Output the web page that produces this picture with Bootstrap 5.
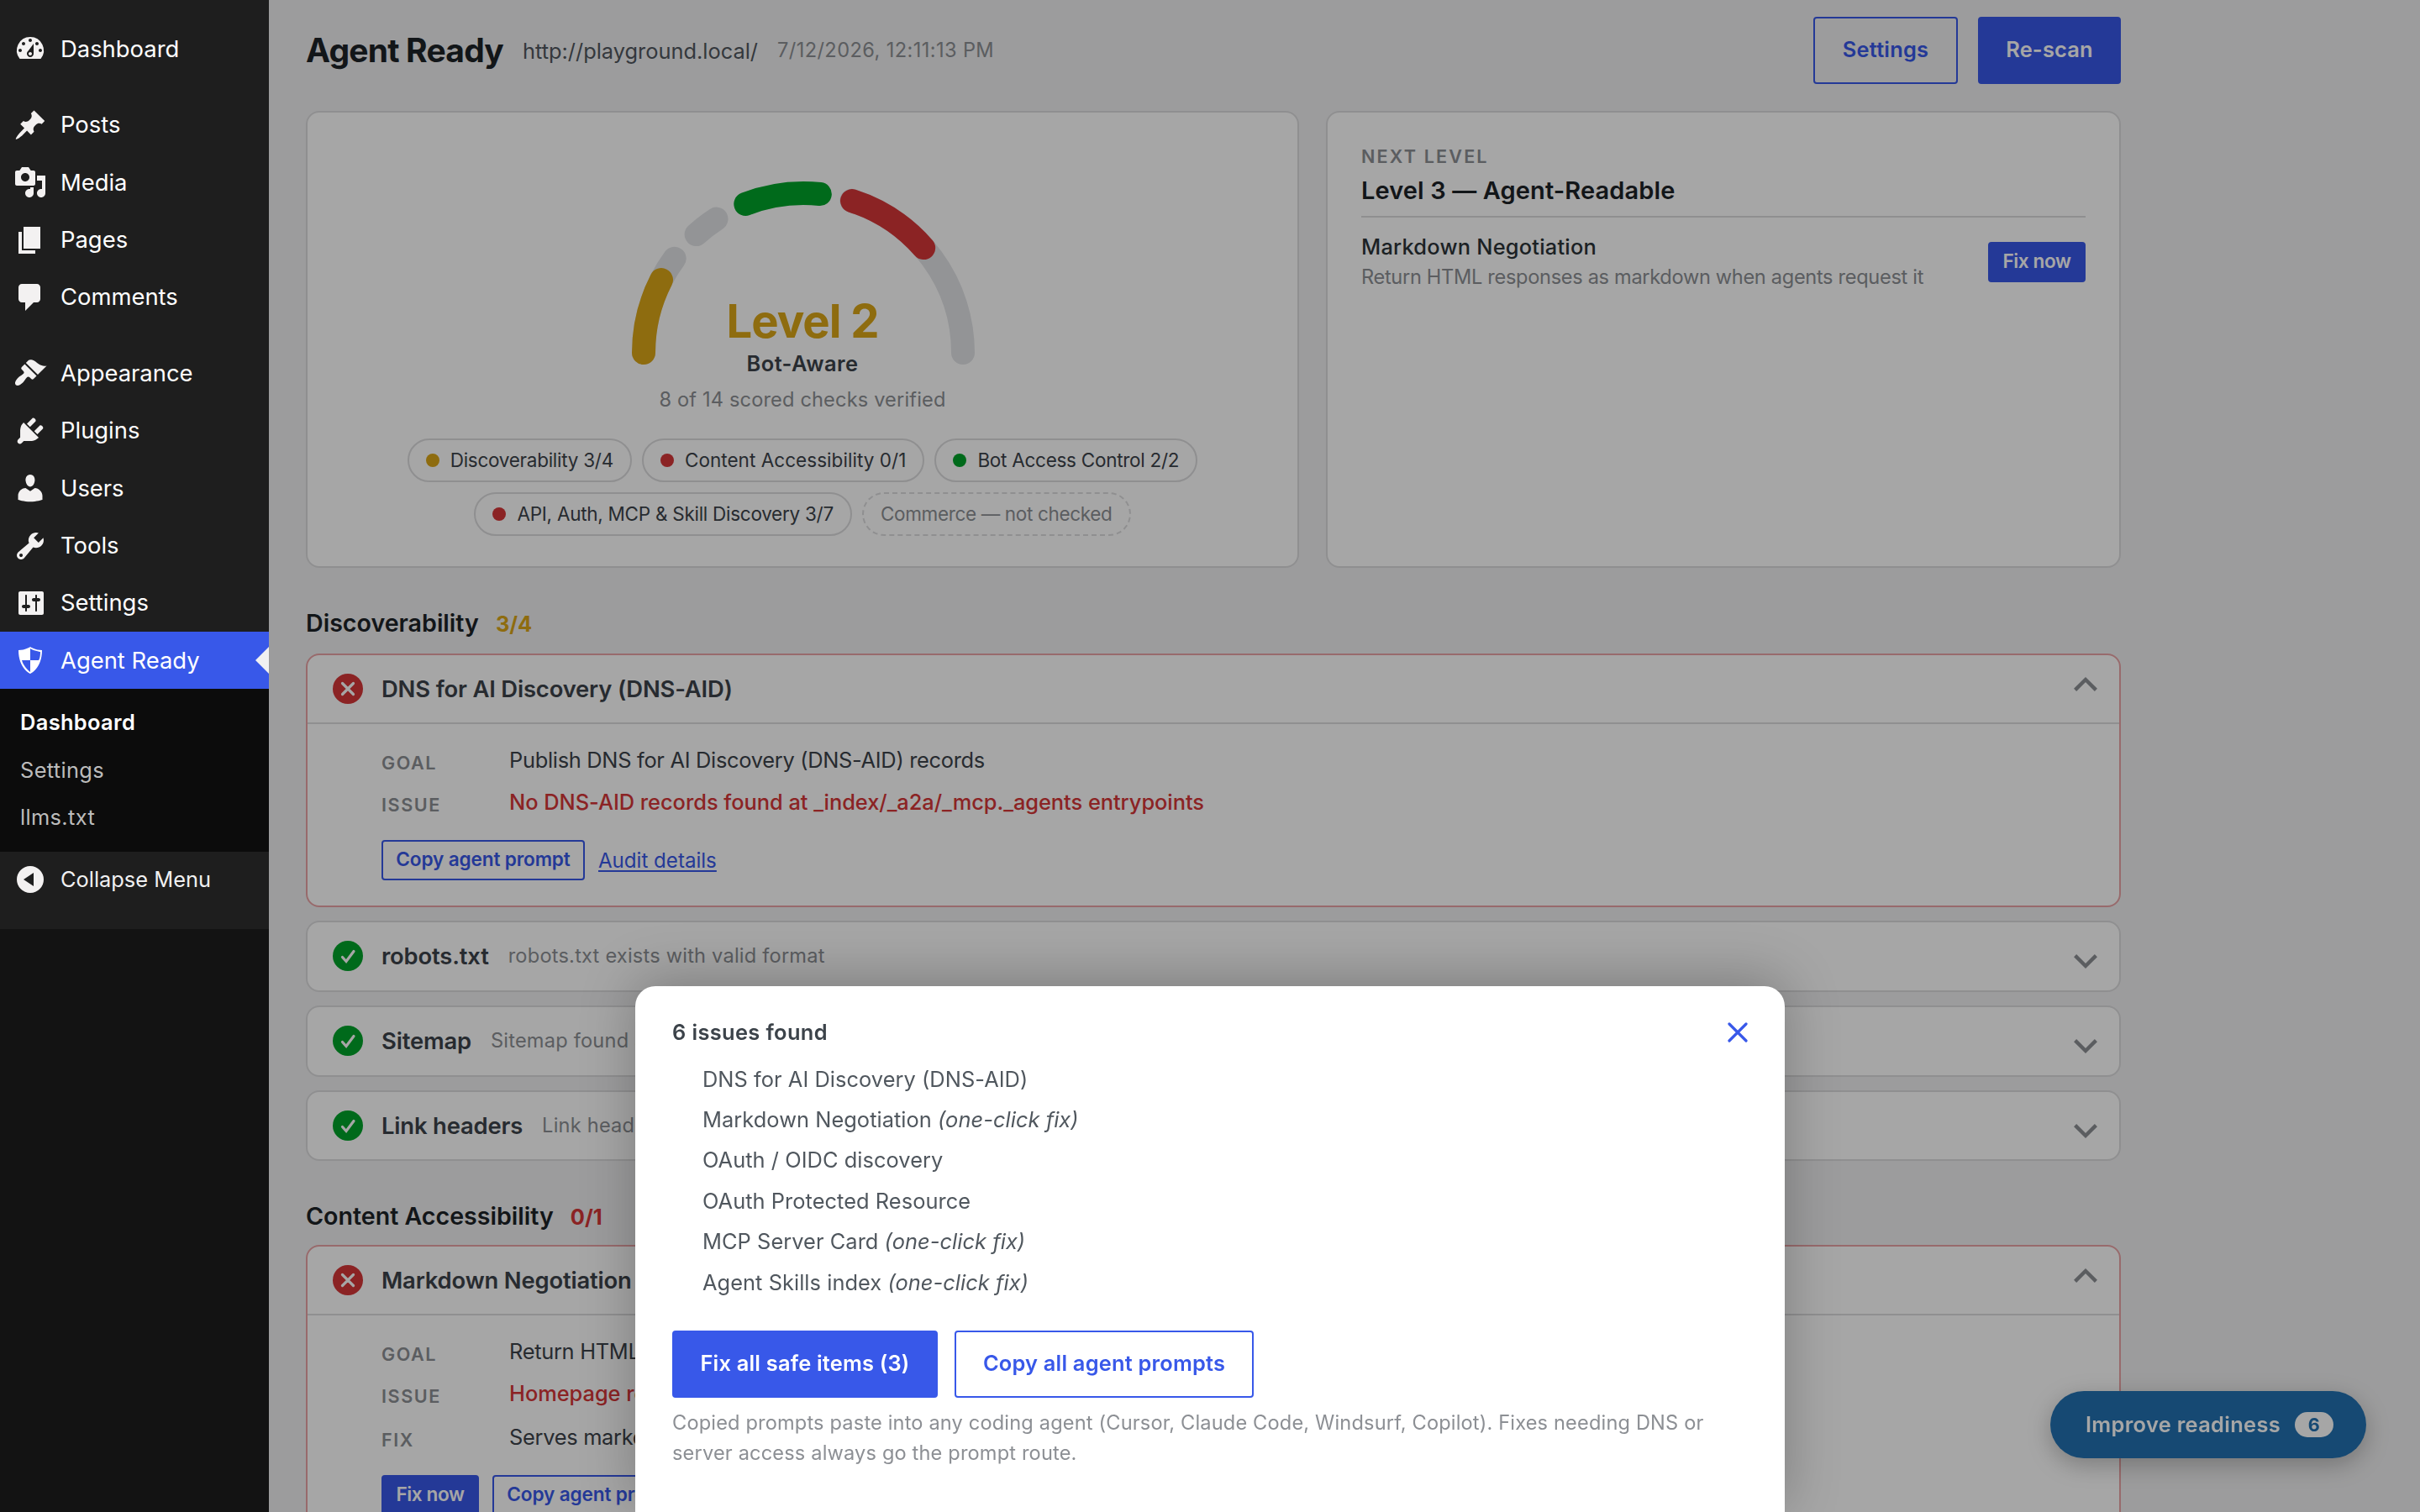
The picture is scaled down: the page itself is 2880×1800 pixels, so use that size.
<!DOCTYPE html>
<html lang="en">
<head>
<meta charset="utf-8">
<title>Agent Ready</title>
<link rel="stylesheet" href="https://cdn.jsdelivr.net/npm/bootstrap@5.3.0/dist/css/bootstrap.min.css">
<style>
  :root { --ink:#1d2327; --text:#3c434a; --soft:#50575e; --muted:#8c8f94; --line:#dcdcde; --blue:#3858e9; --red:#d63638; --green:#00a32a; --gold:#dba617; }
  body { font-family:Inter,"Liberation Sans",sans-serif; font-size:25.4px; line-height:38.4px; background:#f0f0f1; color:var(--text); height:1800px; overflow:hidden; }
  .side-back { width:320px; height:1800px; background:#1e1e1e; }
  .side-menu { position:relative; z-index:20; background:#1e1e1e; height:1106px; padding-top:24.3px; }
  .side-link { height:68.4px; padding-left:16px; gap:16px; color:#fff; font-size:27.4px; text-decoration:none; }
  .side-link:hover { color:#fff; }
  .side-link span { margin-top:-1px; }
  .side-link svg { width:40px; height:40px; fill:#f3f1f1; flex:none; }
  .side-gap { height:22px; }
  .side-link.current { background:var(--blue); position:relative; height:68px; }
  .side-link.current svg { fill:#fff; }
  .side-link.current::after { content:""; position:absolute; right:0; top:18px; border:16px solid transparent; border-left:0; border-right-color:#f0f0f1; }
  .side-sub { background:#0c0c0c; padding:12px 0 12.8px 24px; letter-spacing:.014em; }
  .sub-link { display:block; height:56.4px; line-height:56.4px; color:#bcbcbc; font-size:25.4px; text-decoration:none; }
  .sub-link.on { color:#fff; font-weight:600; }
  .side-collapse { margin-top:-1px; color:#f0f0f1; font-size:25.4px; }
  .page-main { width:2204px; padding:20px 0 0 44px; flex:none; }
  .page-head { height:80px; margin-bottom:32px; }
  .page-title { font-size:39px; font-weight:700; letter-spacing:-.0204em; color:var(--ink); margin:0 23px 0 0; }
  .page-url { padding-top:2px; margin-right:23px; color:var(--soft); }
  .stamp, .note, .desc, .tip { font-size:23.6px; color:var(--muted); }
  .when { letter-spacing:.017em; }
  .btn { --bs-btn-border-width:2px; --bs-btn-border-radius:4px; --bs-btn-font-weight:600; --bs-btn-padding-y:0; --bs-btn-padding-x:0; --bs-btn-line-height:1; display:inline-flex; align-items:center; justify-content:center; height:80px; padding-bottom:2px; font-size:25.4px; letter-spacing:.008em; }
  .btn-primary { --bs-btn-bg:var(--blue); --bs-btn-border-color:var(--blue); }
  .btn-outline-primary { --bs-btn-color:var(--blue); --bs-btn-border-color:var(--blue); }
  .btn-mini { height:48px; font-size:22.6px; letter-spacing:-.0065em; padding-bottom:1px; }
  .w-settings { width:172px; } .w-scan { width:170px; margin-left:24px; } .w-fix { width:116px; letter-spacing:-.018em; } .w-copy { width:242px; } .w-fixall { width:316px; } .w-copyall { width:356px; }
  .panel { background:#fff; border:2px solid var(--line); border-radius:16px; }
  .panels { gap:32px; }
  .gauge-panel { width:1182px; height:544px; padding-top:82px; }
  .next-panel { width:946px; padding:33px 40px 0; }
  .gauge { width:408px; height:218px; margin-left:1.4px; fill:none; stroke-width:28; stroke-linecap:round; }
  .level-num { margin-top:-80px; line-height:56px; font-size:54.4px; font-weight:700; letter-spacing:-.0186em; color:var(--gold); }
  .level-name { margin-top:5px; line-height:36px; font-weight:600; letter-spacing:.018em; }
  .note { margin-top:6.5px; line-height:36px; letter-spacing:.0064em; }
  .pills { gap:12px; margin-top:28.5px; width:1000px; }
  .pill { font-size:22.5px; height:52px; padding:0 20px; gap:13px; border:2px solid var(--line); border-radius:26px; letter-spacing:-.012em; }
  .pill i { width:16px; height:16px; border-radius:50%; }
  .pill.open { letter-spacing:.002em; }
  .pill.off { border-style:dashed; color:var(--muted); letter-spacing:-.015em; }
  .dot-gold { background:var(--gold); } .dot-red { background:var(--red); } .dot-green { background:var(--green); }
  .tx-gold { color:var(--gold); } .tx-red { color:var(--red); }
  .kicker { font-size:21.6px; font-weight:600; color:var(--muted); line-height:38px; letter-spacing:.1em; }
  .next-title { font-size:29px; font-weight:600; color:var(--ink); line-height:44px; letter-spacing:.004em; }
  .next-row { border-top:2px solid var(--line); margin-top:8px; padding-top:17px; }
  .next-name { line-height:36px; font-weight:500; color:#2c3338; letter-spacing:.009em; }
  .next-desc { line-height:36px; letter-spacing:-.0135em; }
  .sect { height:40px; line-height:40px; margin:46px 0 16px; gap:20px; }
  .sect b { font-size:28.6px; font-weight:600; color:var(--ink); letter-spacing:0; }
  .sect span { font-size:25.4px; font-weight:700; padding-top:1px; }
  .sect.second { margin:45.6px 0 14px; }
  .check-card { margin-bottom:16px; }
  .check-card.bad { border-color:#eaa4a6; }
  .check-head { height:80.8px; padding:0 26px 0 30px; }
  .bad .check-head { height:82px; border-bottom:2px solid var(--line); }
  .mark-ic { width:36px; height:36px; margin-right:22px; fill:none; stroke:#fff; stroke-width:3.2; stroke-linecap:round; }
  .check-head b { font-size:27.4px; font-weight:600; letter-spacing:-.006em; }
  .desc { margin-left:23px; letter-spacing:.009em; }
  .chev { width:28px; height:18px; margin-left:auto; fill:none; stroke:var(--muted); stroke-width:4.4; margin-top:13.6px; }
  .bad .chev { margin-top:-12px; }
  .check-body { padding:24px 0 30px 88px; }
  .fact { height:38.4px; margin-bottom:12px; }
  .fact dt { width:152px; padding-top:3px; font-size:21.6px; font-weight:600; color:var(--muted); letter-spacing:.072em; }
  .fact dd { margin:0; letter-spacing:-.0114em; }
  .fact dd.err { color:var(--red); font-weight:500; letter-spacing:-.0012em; }
  .fact.late { margin:13.4px 0 0; }
  .check-act { margin-top:25.2px; gap:16px; }
  .audit { color:var(--blue); font-size:24.1px; padding-top:3px; text-decoration-thickness:2px; text-underline-offset:3px; }
  .shade { z-index:10; background:rgba(0,0,0,.35); }
  .fab { right:64px; bottom:64px; width:376px; height:80px; padding-left:42px; gap:17px; border-radius:40px; background:#2271b1; color:#fff; font-weight:600; letter-spacing:.013em; box-shadow:0 8px 28px rgba(0,0,0,.25); }
  .fab-count { width:46px; height:30px; border-radius:15px; background:#fff; color:#2271b1; font-size:21.6px; line-height:31px; font-weight:700; text-align:center; }
  .sheet { z-index:30; width:1368px; height:626px; padding:37px 44px 0; background:#fff; border-radius:24px 24px 0 0; box-shadow:0 -8px 64px rgba(0,0,0,.25); }
  .sheet-top { height:36px; font-weight:600; letter-spacing:.0148em; }
  .sheet-top svg { width:24px; height:24px; stroke:var(--blue); stroke-width:3.2; stroke-linecap:round; }
  .sheet ul { margin:13.5px 0 33.1px; padding-left:36px; line-height:48.4px; color:var(--soft); letter-spacing:.002em; }
  .sheet-act { gap:20px; }
  .tip { margin:12px 0 0; line-height:36px; letter-spacing:.0067em; }
</style>
</head>
<body class="d-flex">
<div class="side-back flex-shrink-0">
  <nav class="side-menu">
    <a class="side-link d-flex align-items-center"><svg viewBox="0 0 20 20"><path fill-rule="evenodd" d="M3.76 16h12.48A7.998 7.998 0 0 0 10 3a7.998 7.998 0 0 0-6.24 13zM10 4c.55 0 1 .45 1 1s-.45 1-1 1-1-.45-1-1 .45-1 1-1zM6 6c.55 0 1 .45 1 1s-.45 1-1 1-1-.45-1-1 .45-1 1-1zm8 0c.55 0 1 .45 1 1s-.45 1-1 1-1-.45-1-1 .45-1 1-1zm-5.37 5.55L12 7v6c0 1.1-.9 2-2 2s-2-.9-2-2c0-.57.24-1.08.63-1.45zM4 10c.55 0 1 .45 1 1s-.45 1-1 1-1-.45-1-1 .45-1 1-1zm12 0c.55 0 1 .45 1 1s-.45 1-1 1-1-.45-1-1 .45-1 1-1zm-5 3c0-.55-.45-1-1-1s-1 .45-1 1 .45 1 1 1 1-.45 1-1z"/></svg><span>Dashboard</span></a>
    <div class="side-gap"></div>
    <a class="side-link d-flex align-items-center"><svg viewBox="0 0 20 20"><path d="M10.44 3.02l1.82-1.82 6.36 6.35-1.83 1.82c-1.05-.68-2.48-.57-3.41.36l-.75.75c-.92.93-1.04 2.35-.35 3.41l-1.83 1.82-2.41-2.41-2.8 2.79c-.42.42-3.38 2.71-3.8 2.29s1.86-3.39 2.28-3.81l2.79-2.79L4.1 9.36l1.83-1.82c1.05.69 2.48.57 3.4-.36l.75-.75c.93-.92 1.05-2.35.36-3.41z"/></svg><span>Posts</span></a>
    <a class="side-link d-flex align-items-center"><svg viewBox="0 0 20 20"><path fill-rule="evenodd" d="M13 11V4c0-.55-.45-1-1-1h-1.67L9 1H5L3.67 3H2c-.55 0-1 .45-1 1v7c0 .55.45 1 1 1h10c.55 0 1-.45 1-1zM7 4.5c1.38 0 2.5 1.12 2.5 2.5S8.38 9.5 7 9.5 4.5 8.38 4.5 7 5.62 4.5 7 4.5zM14 6h5v10.5c0 1.38-1.12 2.5-2.5 2.5S14 17.88 14 16.5s1.12-2.5 2.5-2.5c.17 0 .34.02.5.05V9h-3V6zm-4 8.05V13h2v3.5c0 1.38-1.12 2.5-2.5 2.5S7 17.88 7 16.5 8.12 14 9.5 14c.17 0 .34.02.5.05z"/></svg><span>Media</span></a>
    <a class="side-link d-flex align-items-center"><svg viewBox="0 0 20 20"><path d="M6 15V2h10v13H6zm-1 1h8v2H3V5h2v11z"/></svg><span>Pages</span></a>
    <a class="side-link d-flex align-items-center"><svg viewBox="0 0 20 20"><path d="M5 2h9c1.1 0 2 .9 2 2v7c0 1.1-.9 2-2 2h-2l-5 5v-5H5c-1.1 0-2-.9-2-2V4c0-1.1.9-2 2-2z"/></svg><span>Comments</span></a>
    <div class="side-gap"></div>
    <a class="side-link d-flex align-items-center"><svg viewBox="0 0 20 20"><path d="M14.48 11.06L7.41 3.99l1.5-1.5c.5-.56 2.3-.47 3.51.32 1.21.8 1.43 1.28 2.91 2.1 1.18.64 2.45 1.26 4.45.85zm-.71.71L6.7 4.7 4.93 6.47c-.39.39-.39 1.02 0 1.41l1.06 1.06c.39.39.39 1.03 0 1.42-.6.6-1.43 1.11-2.21 1.69-.35.26-.7.53-1.01.84C1.43 14.23.4 16.08 1.4 17.07c.99 1 2.84-.03 4.18-1.36.31-.31.58-.66.85-1.02.57-.78 1.08-1.61 1.69-2.21.39-.39 1.02-.39 1.41 0l1.06 1.06c.39.39 1.02.39 1.41 0z"/></svg><span>Appearance</span></a>
    <a class="side-link d-flex align-items-center"><svg viewBox="0 0 20 20"><path d="M13.11 4.36L9.87 7.6 8 5.73l3.24-3.24c.35-.34 1.05-.2 1.56.32.52.51.66 1.21.31 1.55zm-8 1.77l.91-1.12 9.01 9.01-1.19.84c-.71.71-2.63 1.16-3.82 1.16H6.14L4.9 17.26c-.59.59-1.54.59-2.12 0-.59-.58-.59-1.53 0-2.12l1.24-1.24v-3.88c0-1.13.4-3.19 1.09-3.89zm7.26 3.97l3.24-3.24c.34-.35 1.04-.21 1.55.31.52.51.66 1.21.31 1.55l-3.24 3.25z"/></svg><span>Plugins</span></a>
    <a class="side-link d-flex align-items-center"><svg viewBox="0 0 20 20"><path d="M10 9.25c-2.27 0-2.73-3.44-2.73-3.44C7 4.02 7.82 2 9.97 2c2.16 0 2.98 2.02 2.71 3.81 0 0-.41 3.44-2.68 3.44zm0 2.57L12.72 10c2.39 0 4.52 2.33 4.52 4.53v2.49s-3.65 1.13-7.24 1.13c-3.65 0-7.24-1.13-7.24-1.13v-2.49c0-2.25 1.94-4.48 4.47-4.48z"/></svg><span>Users</span></a>
    <a class="side-link d-flex align-items-center"><svg viewBox="0 0 20 20"><path fill-rule="evenodd" d="M16.68 9.77c-1.34 1.34-3.3 1.67-4.95.99l-5.41 6.52c-.99.99-2.59.99-3.58 0s-.99-2.59 0-3.57l6.52-5.42c-.68-1.65-.35-3.61.99-4.95 1.28-1.28 3.12-1.62 4.72-1.06l-2.89 2.89 2.82 2.82 2.86-2.87c.53 1.58.18 3.39-1.08 4.65zM3.81 16.21c.4.39 1.04.39 1.43 0 .4-.4.4-1.04 0-1.43-.39-.4-1.03-.4-1.43 0-.39.39-.39 1.03 0 1.43z"/></svg><span>Tools</span></a>
    <a class="side-link d-flex align-items-center"><svg viewBox="0 0 20 20"><path fill-rule="evenodd" d="M18 16V4c0-.55-.45-1-1-1H4c-.55 0-1 .45-1 1v12c0 .55.45 1 1 1h13c.55 0 1-.45 1-1zM8 11h1c.55 0 1 .45 1 1s-.45 1-1 1H8v1.5c0 .28-.22.5-.5.5s-.5-.22-.5-.5V13H6c-.55 0-1-.45-1-1s.45-1 1-1h1V5.5c0-.28.22-.5.5-.5s.5.22.5.5V11zm5-2h-1c-.55 0-1-.45-1-1s.45-1 1-1h1V5.5c0-.28.22-.5.5-.5s.5.22.5.5V7h1c.55 0 1 .45 1 1s-.45 1-1 1h-1v5.5c0 .28-.22.5-.5.5s-.5-.22-.5-.5V9z"/></svg><span>Settings</span></a>
    <a class="side-link current d-flex align-items-center"><svg viewBox="0 0 20 20"><path fill-rule="evenodd" d="M10 2s3 2 7 2c0 11-7 14-7 14S3 15 3 4c4 0 7-2 7-2zm0 8h5s1-1 1-5c0 0-5-1-6-2v7H5c1 4 5 7 5 7v-7z"/></svg><span>Agent Ready</span></a>
    <div class="side-sub">
      <a class="sub-link on">Dashboard</a>
      <a class="sub-link">Settings</a>
      <a class="sub-link">llms.txt</a>
    </div>
    <a class="side-link side-collapse d-flex align-items-center"><svg viewBox="0 0 20 20"><path fill-rule="evenodd" d="M10 2a8 8 0 1 0 0 16 8 8 0 0 0 0-16zM12 6v8l-6-4z"/></svg><span>Collapse Menu</span></a>
  </nav>
</div>

<main class="page-main">
  <header class="page-head d-flex align-items-center">
    <h1 class="page-title">Agent Ready</h1>
    <span class="page-url">http://playground.local/</span>
    <span class="stamp when">7/12/2026, 12:11:13 PM</span>
    <button class="btn btn-outline-primary w-settings ms-auto">Settings</button>
    <button class="btn btn-primary w-scan">Re-scan</button>
  </header>

  <div class="panels d-flex">
    <section class="panel gauge-panel d-flex flex-column align-items-center">
      <svg class="gauge" viewBox="0 0 408 218">
        <g stroke="#e2e4e7">
          <path pathLength="180" d="M14 204A190 190 0 0 1 394 204" stroke-dasharray="36.2 400"/>
          <path pathLength="180" d="M14 204A190 190 0 0 1 394 204" stroke-dasharray="9.1 400" stroke-dashoffset="-47.9"/>
          <path pathLength="180" d="M14 204A190 190 0 0 1 394 204" stroke-dasharray="72.4 400" stroke-dashoffset="-107.6"/>
        </g>
        <path stroke="#dba617" pathLength="180" d="M14 204A190 190 0 0 1 394 204" stroke-dasharray="27.2 400"/>
        <path stroke="#00a32a" pathLength="180" d="M14 204A190 190 0 0 1 394 204" stroke-dasharray="27.2 400" stroke-dashoffset="-68.8"/>
        <path stroke="#d63638" pathLength="180" d="M14 204A190 190 0 0 1 394 204" stroke-dasharray="31.1 400" stroke-dashoffset="-107.8"/>
      </svg>
      <div class="level-num">Level 2</div>
      <div class="level-name">Bot-Aware</div>
      <div class="note">8 of 14 scored checks verified</div>
      <div class="pills d-flex flex-wrap justify-content-center">
        <span class="pill d-flex align-items-center"><i class="dot-gold"></i>Discoverability 3/4</span>
        <span class="pill open d-flex align-items-center"><i class="dot-red"></i>Content Accessibility 0/1</span>
        <span class="pill d-flex align-items-center"><i class="dot-green"></i>Bot Access Control 2/2</span>
        <span class="pill d-flex align-items-center"><i class="dot-red"></i>API, Auth, MCP &amp; Skill Discovery 3/7</span>
        <span class="pill off d-flex align-items-center">Commerce — not checked</span>
      </div>
    </section>
    <section class="panel next-panel">
      <div class="kicker">NEXT LEVEL</div>
      <div class="next-title">Level 3 — Agent-Readable</div>
      <div class="next-row d-flex align-items-center">
        <div>
          <div class="next-name">Markdown Negotiation</div>
          <div class="stamp next-desc">Return HTML responses as markdown when agents request it</div>
        </div>
        <button class="btn btn-primary btn-mini w-fix ms-auto">Fix now</button>
      </div>
    </section>
  </div>

  <div class="sect d-flex"><b>Discoverability</b><span class="tx-gold">3/4</span></div>

  <article class="panel check-card bad">
    <div class="check-head d-flex align-items-center"><svg class="mark-ic" viewBox="0 0 36 36"><circle cx="18" cy="18" r="18" fill="#d63638" stroke="none"/><path d="M11.5 11.5l13 13M24.5 11.5l-13 13"/></svg><b>DNS for AI Discovery (DNS-AID)</b><svg class="chev" viewBox="0 0 28 18"><path d="M1.6 16.4L14 4l12.4 12.4"/></svg></div>
    <div class="check-body">
      <dl class="m-0">
        <div class="fact d-flex"><dt>GOAL</dt><dd>Publish DNS for AI Discovery (DNS-AID) records</dd></div>
        <div class="fact d-flex m-0"><dt>ISSUE</dt><dd class="err">No DNS-AID records found at _index/_a2a/_mcp._agents entrypoints</dd></div>
      </dl>
      <div class="check-act d-flex align-items-center"><button class="btn btn-outline-primary btn-mini w-copy">Copy agent prompt</button><a class="audit" href="#">Audit details</a></div>
    </div>
  </article>

  <article class="panel check-card"><div class="check-head d-flex align-items-center"><svg class="mark-ic" viewBox="0 0 36 36"><circle cx="18" cy="18" r="18" fill="#00a32a" stroke="none"/><path d="M11.5 19.5l4.5 5L25 12.5"/></svg><b>robots.txt</b><span class="desc">robots.txt exists with valid format</span><svg class="chev" viewBox="0 0 28 18"><path d="M1.6 1.6L14 14 26.4 1.6"/></svg></div></article>
  <article class="panel check-card"><div class="check-head d-flex align-items-center"><svg class="mark-ic" viewBox="0 0 36 36"><circle cx="18" cy="18" r="18" fill="#00a32a" stroke="none"/><path d="M11.5 19.5l4.5 5L25 12.5"/></svg><b>Sitemap</b><span class="desc">Sitemap found at /wp-sitemap.xml</span><svg class="chev" viewBox="0 0 28 18"><path d="M1.6 1.6L14 14 26.4 1.6"/></svg></div></article>
  <article class="panel check-card mb-0"><div class="check-head d-flex align-items-center"><svg class="mark-ic" viewBox="0 0 36 36"><circle cx="18" cy="18" r="18" fill="#00a32a" stroke="none"/><path d="M11.5 19.5l4.5 5L25 12.5"/></svg><b>Link headers</b><span class="desc">Link headers present</span><svg class="chev" viewBox="0 0 28 18"><path d="M1.6 1.6L14 14 26.4 1.6"/></svg></div></article>

  <div class="sect second d-flex"><b>Content Accessibility</b><span class="tx-red">0/1</span></div>

  <article class="panel check-card bad">
    <div class="check-head d-flex align-items-center"><svg class="mark-ic" viewBox="0 0 36 36"><circle cx="18" cy="18" r="18" fill="#d63638" stroke="none"/><path d="M11.5 11.5l13 13M24.5 11.5l-13 13"/></svg><b>Markdown Negotiation</b><svg class="chev" viewBox="0 0 28 18"><path d="M1.6 16.4L14 4l12.4 12.4"/></svg></div>
    <div class="check-body">
      <dl class="m-0">
        <div class="fact d-flex"><dt>GOAL</dt><dd>Return HTML responses as markdown</dd></div>
        <div class="fact d-flex"><dt>ISSUE</dt><dd class="err">Homepage returned HTML only</dd></div>
        <div class="fact late d-flex"><dt>FIX</dt><dd>Serves markdown to agents</dd></div>
      </dl>
      <div class="check-act d-flex"><button class="btn btn-primary btn-mini w-fix">Fix now</button><button class="btn btn-outline-primary btn-mini w-copy">Copy agent prompt</button></div>
    </div>
  </article>
</main>

<div class="fab position-fixed d-flex align-items-center"><span>Improve readiness</span><span class="fab-count">6</span></div>
<div class="shade position-fixed top-0 start-0 w-100 h-100"></div>

<section class="sheet position-fixed bottom-0 start-50 translate-middle-x">
  <div class="sheet-top d-flex align-items-center justify-content-between"><span>6 issues found</span><svg viewBox="0 0 24 24"><path d="M2 2l20 20M22 2L2 22"/></svg></div>
  <ul class="list-unstyled">
    <li>DNS for AI Discovery (DNS-AID)</li>
    <li>Markdown Negotiation <em>(one-click fix)</em></li>
    <li>OAuth / OIDC discovery</li>
    <li>OAuth Protected Resource</li>
    <li>MCP Server Card <em>(one-click fix)</em></li>
    <li>Agent Skills index <em>(one-click fix)</em></li>
  </ul>
  <div class="sheet-act d-flex"><button class="btn btn-primary w-fixall">Fix all safe items (3)</button><button class="btn btn-outline-primary w-copyall">Copy all agent prompts</button></div>
  <p class="tip">Copied prompts paste into any coding agent (Cursor, Claude Code, Windsurf, Copilot). Fixes needing DNS or server access always go the prompt route.</p>
</section>
<script src="https://cdn.jsdelivr.net/npm/bootstrap@5.3.0/dist/js/bootstrap.bundle.min.js"></script>
</body>
</html>
